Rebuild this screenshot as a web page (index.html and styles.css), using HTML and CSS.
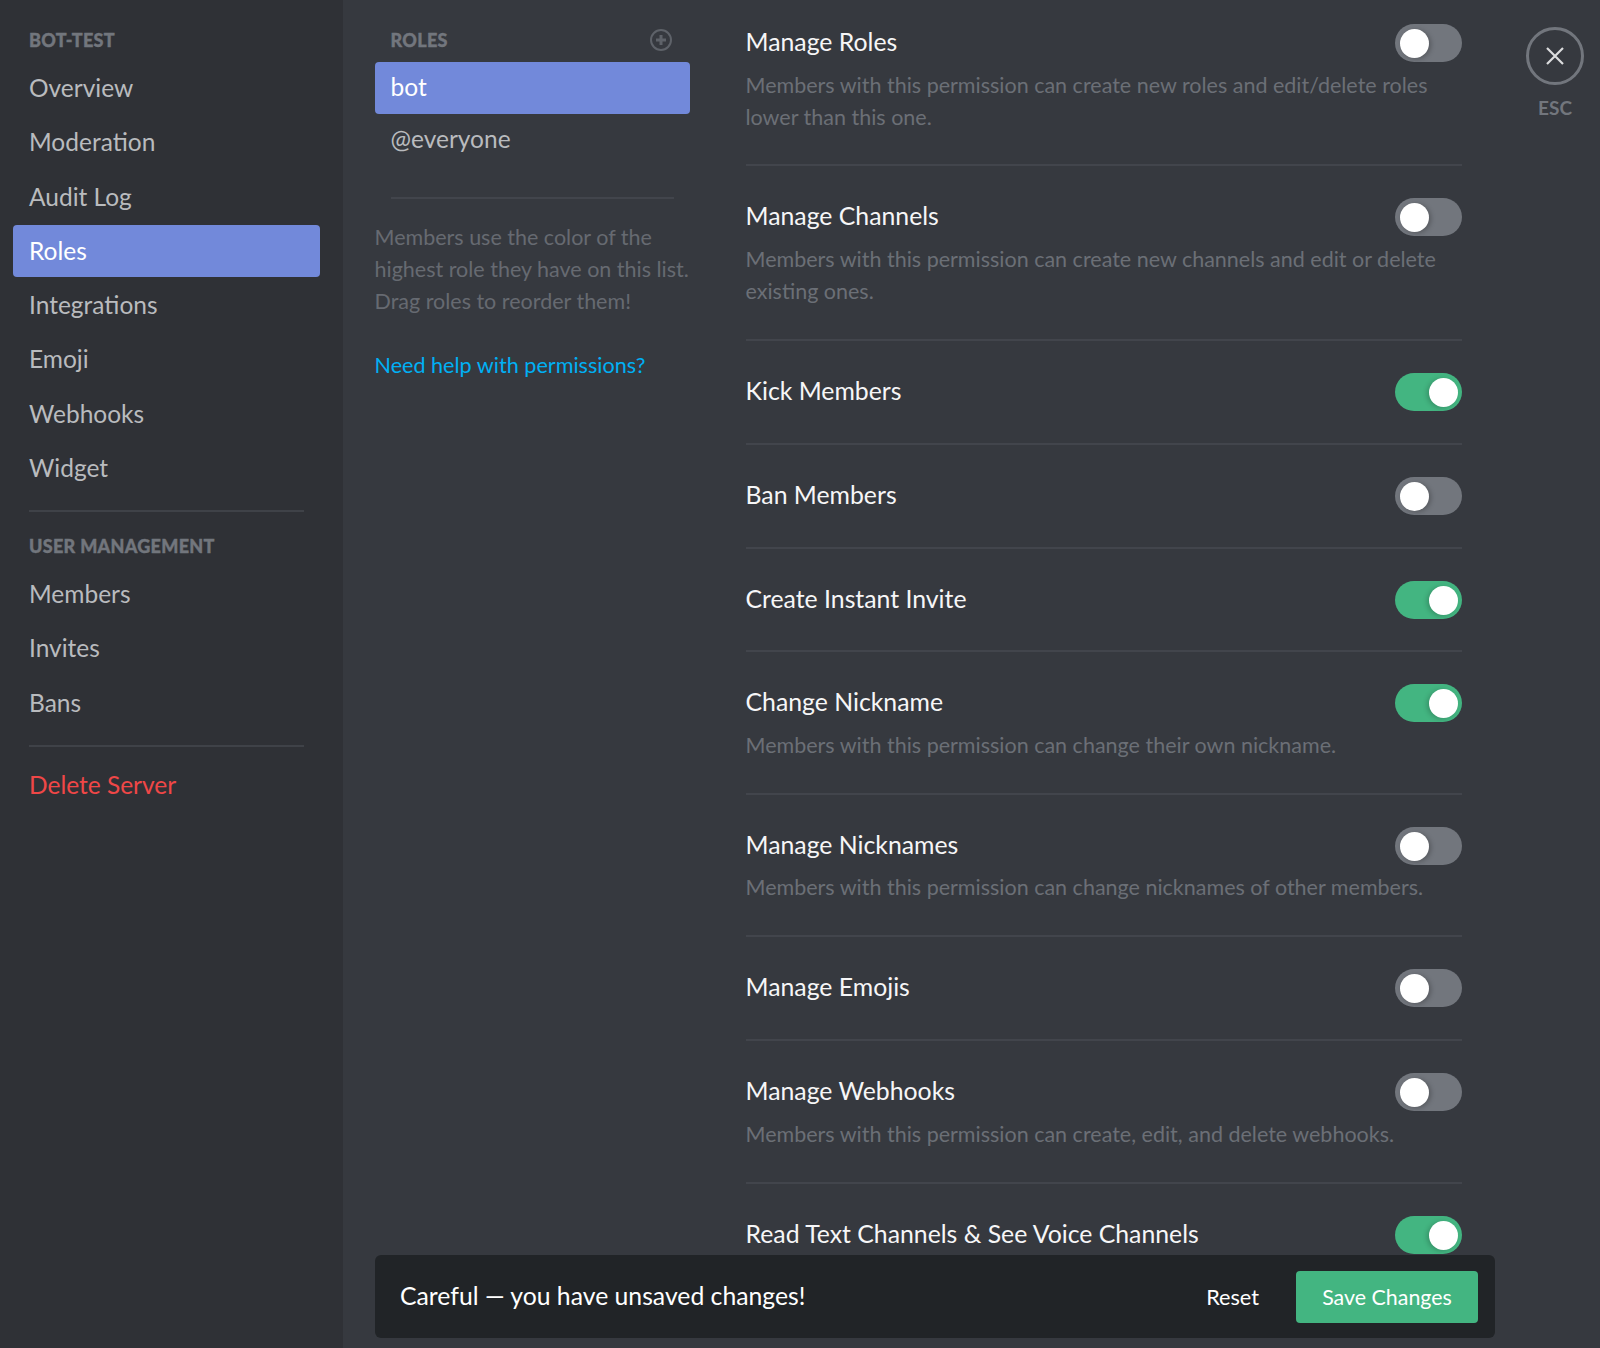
FILE: index.html
```html
<!DOCTYPE html>
<html lang="en">
<head>
    <meta charset="UTF-8">
    <title>Server Settings - Roles</title>
    <link rel="stylesheet" href="styles.css">
</head>
<body>

    <!-- Left navigation -->
    <nav class="sidebar">
        <h3 class="nav-header">BOT-TEST</h3>
        <a class="nav-item">Overview</a>
        <a class="nav-item">Moderation</a>
        <a class="nav-item">Audit Log</a>
        <a class="nav-item active">Roles</a>
        <a class="nav-item">Integrations</a>
        <a class="nav-item">Emoji</a>
        <a class="nav-item">Webhooks</a>
        <a class="nav-item">Widget</a>
        <div class="nav-sep"></div>
        <h3 class="nav-header second">USER MANAGEMENT</h3>
        <a class="nav-item">Members</a>
        <a class="nav-item">Invites</a>
        <a class="nav-item">Bans</a>
        <div class="nav-sep"></div>
        <a class="nav-item danger">Delete Server</a>
    </nav>

    <main class="content">
        <!-- Role list -->
        <section class="roles">
            <div class="roles-header">
                <h3 class="nav-header flat">ROLES</h3>
                <svg class="add-icon" width="24" height="24" viewBox="0 0 24 24">
                    <circle cx="12" cy="12" r="10" fill="none" stroke="#5e6269" stroke-width="2"/>
                    <path d="M12 7v10M7 12h10" stroke="#5e6269" stroke-width="3"/>
                </svg>
            </div>
            <div class="role active">bot</div>
            <div class="role">@everyone</div>
            <div class="roles-sep"></div>
            <p class="roles-help">Members use the color of the<br>highest role they have on this list.<br>Drag roles to reorder them!</p>
            <a class="help-link">Need help with permissions?</a>
        </section>

        <!-- Permissions -->
        <section class="perms">
            <div class="perm">
                <div class="perm-head"><span class="perm-title">Manage Roles</span><span class="toggle"></span></div>
                <p class="perm-desc">Members with this permission can create new roles and edit/delete roles lower than this one.</p>
            </div>
            <div class="perm">
                <div class="perm-head"><span class="perm-title">Manage Channels</span><span class="toggle"></span></div>
                <p class="perm-desc">Members with this permission can create new channels and edit or delete existing ones.</p>
            </div>
            <div class="perm">
                <div class="perm-head"><span class="perm-title">Kick Members</span><span class="toggle on"></span></div>
            </div>
            <div class="perm">
                <div class="perm-head"><span class="perm-title">Ban Members</span><span class="toggle"></span></div>
            </div>
            <div class="perm">
                <div class="perm-head"><span class="perm-title">Create Instant Invite</span><span class="toggle on"></span></div>
            </div>
            <div class="perm">
                <div class="perm-head"><span class="perm-title">Change Nickname</span><span class="toggle on"></span></div>
                <p class="perm-desc">Members with this permission can change their own nickname.</p>
            </div>
            <div class="perm">
                <div class="perm-head"><span class="perm-title">Manage Nicknames</span><span class="toggle"></span></div>
                <p class="perm-desc">Members with this permission can change nicknames of other members.</p>
            </div>
            <div class="perm">
                <div class="perm-head"><span class="perm-title">Manage Emojis</span><span class="toggle"></span></div>
            </div>
            <div class="perm">
                <div class="perm-head"><span class="perm-title">Manage Webhooks</span><span class="toggle"></span></div>
                <p class="perm-desc">Members with this permission can create, edit, and delete webhooks.</p>
            </div>
            <div class="perm">
                <div class="perm-head"><span class="perm-title">Read Text Channels &amp; See Voice Channels</span><span class="toggle on"></span></div>
            </div>
        </section>

        <!-- Close button -->
        <aside class="close">
            <div class="close-btn">
                <svg width="20" height="20" viewBox="0 0 20 20">
                    <path d="M2 2l16 16M18 2L2 18" stroke="#dcddde" stroke-width="2.2"/>
                </svg>
            </div>
            <span class="close-label">ESC</span>
        </aside>

        <!-- Unsaved changes notice -->
        <div class="save-bar">
            <span class="save-msg">Careful — you have unsaved changes!</span>
            <a class="reset">Reset</a>
            <button class="save">Save Changes</button>
        </div>
    </main>

</body>
</html>
```

FILE: styles.css
```css
* {
    box-sizing: border-box;
}

html, body {
    height: 100%;
}

body {
    margin: 0;
    display: flex;
    height: 1348px;
    overflow: hidden;
    background: #36393f;
    font-family: Lato, "Open Sans", sans-serif;
}

h3, p {
    margin: 0;
}

/* Sidebar */
.sidebar {
    width: 343px;
    flex-shrink: 0;
    padding: 29px 23px 0 13px;
    background: #2f3136;
}

.nav-header {
    padding-left: 16px;
    height: 22px;
    line-height: 22px;
    font-size: 18px;
    font-weight: 900;
    letter-spacing: 0.3px;
    -webkit-text-stroke: 0.4px #72767d;
    color: #72767d;
}

.nav-header.second {
    margin-top: 23px;
}

.nav-header.flat {
    padding-left: 0;
}

.nav-item {
    display: block;
    height: 52px;
    line-height: 51px;
    margin-top: 2.3px;
    padding-left: 16px;
    border-radius: 4px;
    font-size: 24.5px;
    color: #b9bbbe;
}

.nav-header + .nav-item {
    margin-top: 11px;
}

.nav-item.active {
    background: #7289da;
    color: #fff;
}

.nav-item.danger {
    color: #f04747;
}

.nav-sep {
    height: 2px;
    margin: 16px 16px 0;
    background: #3f4248;
}

.nav-sep + .nav-item {
    margin-top: 12px;
}

/* Middle column and permissions */
.content {
    position: relative;
    flex: 1;
    display: flex;
    min-width: 0;
}

.roles {
    width: 315.5px;
    margin-left: 31.5px;
    padding-top: 29px;
    flex-shrink: 0;
}

.roles-header {
    display: flex;
    align-items: center;
    justify-content: space-between;
    height: 22px;
    padding: 0 17px 0 16px;
    margin-bottom: 11px;
}

.role {
    height: 52px;
    line-height: 50px;
    padding-left: 16px;
    border-radius: 4px;
    font-size: 24.5px;
    color: #b9bbbe;
}

.role.active {
    background: #7289da;
    color: #fff;
}

.roles-sep {
    height: 2px;
    margin: 31px 16px 0;
    background: #42454c;
}

.roles-help {
    margin-top: 22px;
    font-size: 21.5px;
    line-height: 32px;
    white-space: nowrap;
    color: #666a71;
}

.help-link {
    display: block;
    margin-top: 32px;
    font-size: 21.6px;
    line-height: 32px;
    color: #00b0f4;
}

.perms {
    width: 716.5px;
    margin-top: -8px;
    margin-left: 55.5px;
    flex-shrink: 0;
}

.perm {
    padding: 32px 0 31.9px;
    border-bottom: 2px solid #42454c;
}

.perm-head {
    display: flex;
    align-items: center;
    justify-content: space-between;
    height: 38px;
}

.perm-title {
    padding-bottom: 3px;
    font-size: 24.8px;
    color: #f6f6f7;
}

.perm-desc {
    margin-top: 6.5px;
    font-size: 21.5px;
    line-height: 32px;
    color: #6b6f76;
}

.toggle {
    position: relative;
    width: 67px;
    height: 38px;
    border-radius: 19px;
    background: #72767d;
}

.toggle::after {
    content: "";
    position: absolute;
    top: 5px;
    left: 5px;
    width: 29px;
    height: 29px;
    border-radius: 50%;
    background: #fff;
    box-shadow: 2px 1px 5px rgba(0, 0, 0, 0.25);
}

.toggle.on {
    background: #43b581;
}

.toggle.on::after {
    left: 34px;
    box-shadow: -2px 1px 5px rgba(0, 0, 0, 0.2);
}

/* Close */
.close {
    display: flex;
    flex-direction: column;
    align-items: center;
    width: 58px;
    margin-left: 64px;
    padding-top: 27px;
    flex-shrink: 0;
}

.close-btn {
    display: flex;
    align-items: center;
    justify-content: center;
    width: 58px;
    height: 58px;
    border: 3px solid #72767d;
    border-radius: 50%;
}

.close-label {
    margin-top: 11px;
    font-size: 19px;
    line-height: 24px;
    font-weight: 700;
    color: #72767d;
}

/* Save bar overlays the list */
.save-bar {
    position: absolute;
    left: 31.5px;
    top: 1255px;
    width: 1120.5px;
    height: 83px;
    display: flex;
    align-items: center;
    padding: 0 17px 0 25.5px;
    border-radius: 6px;
    background: #212427;
}

.save-msg {
    flex: 1;
    padding-bottom: 3px;
    font-size: 24.75px;
    color: #fff;
}

.reset {
    font-size: 21.7px;
    color: #fff;
    margin-right: 37px;
}

.save {
    width: 182px;
    height: 52px;
    border: 0;
    border-radius: 4px;
    background: #43b581;
    color: #fff;
    font-family: inherit;
    font-size: 21.4px;
}
```
